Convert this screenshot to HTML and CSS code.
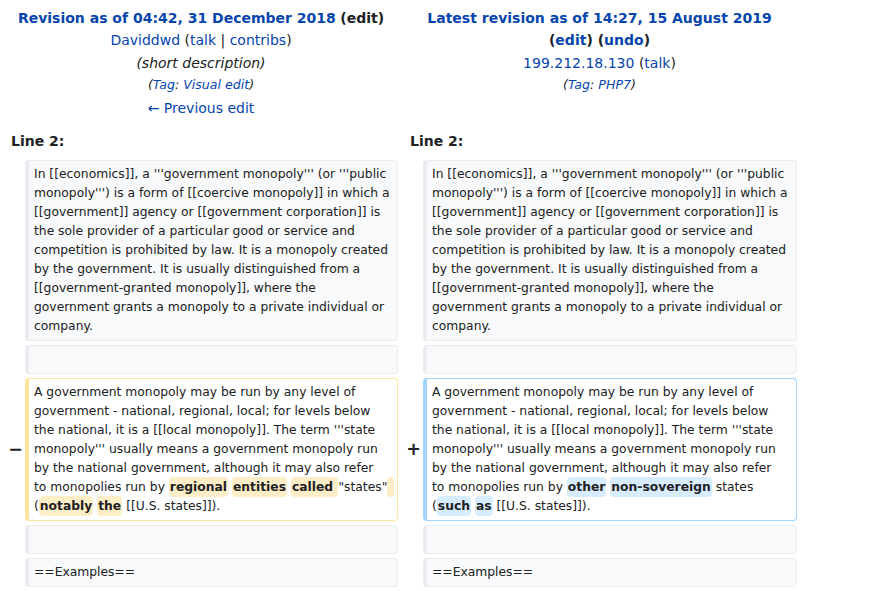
FILE: index.html
```html
<!DOCTYPE html>
<html lang="en">
<head>
<meta charset="utf-8">
<title>Government monopoly: Difference between revisions</title>
<link rel="stylesheet" href="styles.css">
</head>
<body>
<div class="diff">
  <div class="title title-old">
    <div class="t-line"><a class="rev">Revision as of 04:42, 31 December 2018</a> <span class="edit-dark">(edit)</span></div>
    <div class="t-line user"><a>Daviddwd</a> <span class="tools">(<a>talk</a> | <a>contribs</a>)</span></div>
    <div class="t-line summary">(short description)</div>
    <div class="t-line tags">(<a>Tag</a>: <a>Visual edit</a>)</div>
    <div class="t-line"><a>← Previous edit</a></div>
  </div>
  <div class="title title-new">
    <div class="t-line"><a class="rev">Latest revision as of 14:27, 15 August 2019</a> <span class="bold nowrap">(<a>edit</a>) (<a>undo</a>)</span></div>
    <div class="t-line user"><a>199.212.18.130</a> <span class="tools">(<a>talk</a>)</span></div>
    <div class="t-line tags">(<a>Tag</a>: <a>PHP7</a>)</div>
  </div>

  <div class="lineno lineno-old">Line 2:</div>
  <div class="lineno lineno-new">Line 2:</div>

  <div class="marker"></div>
  <div class="cell context"><div>In [[economics]], a '''government monopoly''' (or '''public monopoly''') is a form of [[coercive monopoly]] in which a [[government]] agency or [[government corporation]] is the sole provider of a particular good or service and competition is prohibited by law. It is a monopoly created by the government. It is usually distinguished from a [[government-granted monopoly]], where the government grants a monopoly to a private individual or company.</div></div>
  <div class="marker"></div>
  <div class="cell context"><div>In [[economics]], a '''government monopoly''' (or '''public monopoly''') is a form of [[coercive monopoly]] in which a [[government]] agency or [[government corporation]] is the sole provider of a particular good or service and competition is prohibited by law. It is a monopoly created by the government. It is usually distinguished from a [[government-granted monopoly]], where the government grants a monopoly to a private individual or company.</div></div>

  <div class="marker"></div>
  <div class="cell context"><div><br></div></div>
  <div class="marker"></div>
  <div class="cell context"><div><br></div></div>

  <div class="marker"><span class="sign">−</span></div>
  <div class="cell deleted"><div>A government monopoly may be run by any level of government - national, regional, local; for levels below the national, it is a [[local monopoly]]. The term '''state monopoly''' usually means a government monopoly run by the national government, although it may also refer
to monopolies run by <del class="chg">regional</del> <del class="chg">entities</del> <del class="chg">called </del>"states"<del class="chg"> </del>
(<del class="chg">notably</del> <del class="chg">the</del> [[U.S. states]]).</div></div>
  <div class="marker"><span class="sign">+</span></div>
  <div class="cell added"><div>A government monopoly may be run by any level of government - national, regional, local; for levels below the national, it is a [[local monopoly]]. The term '''state monopoly''' usually means a government monopoly run by the national government, although it may also refer
to monopolies run by <ins class="chg">other</ins> <ins class="chg">non-sovereign</ins> states
(<ins class="chg">such</ins> <ins class="chg">as</ins> [[U.S. states]]).</div></div>

  <div class="marker"></div>
  <div class="cell context"><div><br></div></div>
  <div class="marker"></div>
  <div class="cell context"><div><br></div></div>

  <div class="marker"></div>
  <div class="cell context"><div>==Examples==</div></div>
  <div class="marker"></div>
  <div class="cell context"><div>==Examples==</div></div>
</div>
</body>
</html>
```

FILE: styles.css
```css
html, body {
  margin: 0;
  padding: 0;
  background: #ffffff;
}

body {
  font-family: "DejaVu Sans", sans-serif;
  font-size: 14px;
  color: #202122;
}

a {
  color: #0645ad;
  text-decoration: none;
}

.diff {
  display: grid;
  grid-template-columns: 17px 373px 17px 374px;
  column-gap: 4px;
  row-gap: 4px;
  padding: 7px 0 0 4px;
  width: 797px;
  box-sizing: border-box;
}

.title {
  text-align: center;
  line-height: 22.4px;
  align-self: start;
}

.title-old { grid-row: 1; grid-column: 1 / 3; }
.title-new { grid-row: 1; grid-column: 3 / 5; }

.rev { font-weight: bold; }
.edit-dark { font-weight: bold; color: #202122; }
.bold { font-weight: bold; }
.nowrap { white-space: nowrap; }

.summary {
  font-style: italic;
  color: #202122;
}

.tags {
  font-style: italic;
  font-size: 12.6px;
  color: #202122;
}

.lineno {
  grid-row: 2;
  font-weight: bold;
  line-height: 22px;
  padding-left: 7px;
  margin-top: 7px;
  margin-bottom: 4px;
}

.lineno-old { grid-column: 1 / 3; }
.lineno-new { grid-column: 3 / 5; padding-left: 8px; }

.marker {
  display: flex;
  align-items: center;
  justify-content: flex-end;
  font-weight: bold;
  font-size: 17.5px;
  line-height: 1.2;
  color: #202122;
}

.sign {
  margin-right: -2px;
}

.cell {
  font-size: 12.32px;
  line-height: 19px;
  border-style: solid;
  border-width: 1px 1px 1px 4px;
  border-radius: 4px;
  padding: 4px 5px 4px 5px;
  white-space: pre-wrap;
  word-wrap: break-word;
  color: #202122;
}

.context {
  background: #f8f9fa;
  border-color: #eaecf0;
}

.deleted {
  background: #ffffff;
  border-color: #ffe49c;
}

.added {
  background: #ffffff;
  border-color: #a3d3ff;
}

.chg {
  font-weight: bold;
  text-decoration: none;
  border-radius: 4px;
  padding: 3px 1px;
}

.deleted .chg { background: #feeec8; }
.added .chg { background: #d8ecff; }
```
